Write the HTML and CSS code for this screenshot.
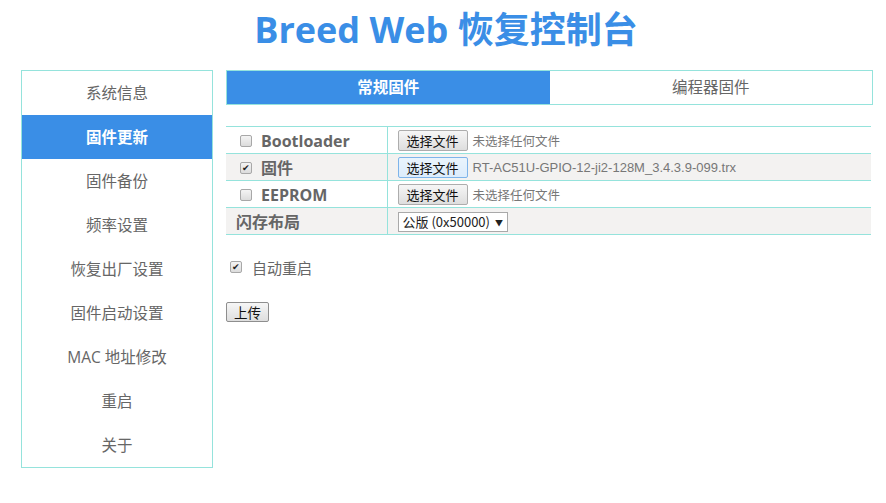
FILE: index.html
```html
<!DOCTYPE html>
<html lang="zh-CN">
<head>
<meta charset="utf-8">
<title>Breed Web 恢复控制台</title>
<link rel="stylesheet" href="styles.css">
</head>
<body>
<h1 class="title">Breed Web 恢复控制台</h1>
<div class="layout">
  <ul class="menu">
    <li class="menu-item">系统信息</li>
    <li class="menu-item active">固件更新</li>
    <li class="menu-item">固件备份</li>
    <li class="menu-item">频率设置</li>
    <li class="menu-item">恢复出厂设置</li>
    <li class="menu-item">固件启动设置</li>
    <li class="menu-item">MAC 地址修改</li>
    <li class="menu-item">重启</li>
    <li class="menu-item">关于</li>
  </ul>
  <div class="main">
    <div class="tabs">
      <div class="tab active">常规固件</div>
      <div class="tab">编程器固件</div>
    </div>
    <table class="form">
      <tr>
        <td class="label"><span class="cb"></span><span class="lt">Bootloader</span></td>
        <td class="field"><span class="btn">选择文件</span><span class="fname">未选择任何文件</span></td>
      </tr>
      <tr class="alt">
        <td class="label"><span class="cb checked">&#10004;</span><span class="lt">固件</span></td>
        <td class="field"><span class="btn focus">选择文件</span><span class="fname file">RT-AC51U-GPIO-12-ji2-128M_3.4.3.9-099.trx</span></td>
      </tr>
      <tr>
        <td class="label"><span class="cb"></span><span class="lt">EEPROM</span></td>
        <td class="field"><span class="btn">选择文件</span><span class="fname">未选择任何文件</span></td>
      </tr>
      <tr class="alt">
        <td class="label plain"><span class="lt">闪存布局</span></td>
        <td class="field"><span class="select">公版 (0x50000) <span class="arrow">&#9660;</span></span></td>
      </tr>
    </table>
    <div class="reboot"><span class="cb checked">&#10004;</span><span>自动重启</span></div>
    <div class="upload"><span class="btn up">上传</span></div>
  </div>
</div>
</body>
</html>
```
FILE: styles.css
```css
* { box-sizing: border-box; }
body {
  margin: 0;
  background: #fff;
  font-family: "Open Sans", "Noto Sans CJK SC", sans-serif;
  color: #666;
}
.title {
  margin: 0;
  height: 70px;
  padding-top: 5px;
  text-align: center;
  font-family: "Open Sans", "Noto Sans CJK SC", sans-serif;
  font-size: 36px;
  line-height: 50px;
  font-weight: 700;
  color: #3a8ee6;
  padding-left: 6px;
}
.layout {
  display: flex;
  gap: 13px;
  padding-left: 21px;
}
.menu {
  list-style: none;
  margin: 0;
  padding: 0;
  width: 192px;
  border: 1px solid #95e3dc;
}
.menu-item {
  height: 44px;
  line-height: 44px;
  text-align: center;
  font-size: 15.5px;
  color: #666;
}
.menu-item.active {
  background: #3a8ee6;
  color: #fff;
  font-weight: 700;
}
.main {
  width: 647px;
}
.tabs {
  display: flex;
  height: 35px;
  border: 1px solid #95e3dc;
}
.tab {
  flex: 1;
  text-align: center;
  line-height: 33px;
  font-size: 15.5px;
  color: #666;
}
.tab.active {
  background: #3a8ee6;
  color: #fff;
  font-weight: 700;
}
.form {
  margin-top: 21px;
  width: 645px;
  border-collapse: collapse;
}
.form td {
  height: 27px;
  padding: 0;
  border-top: 1px solid #95e3dc;
  border-bottom: 1px solid #95e3dc;
  line-height: 20px;
}
.form tr.alt td { background: #f3f2f1; }
.form td.label {
  width: 161px;
  border-right: 1px solid #95e3dc;
  padding-left: 14px;
  font-size: 16px;
  font-weight: 700;
  color: #666;
  white-space: nowrap;
}
.form td.label.plain { padding-left: 10px; }
.form td.field {
  padding-left: 10px;
}
.lt { vertical-align: middle; line-height: 20px; }
.cb {
  display: inline-block;
  width: 12px;
  height: 12px;
  border: 1px solid #a8a8a8;
  border-radius: 2px;
  background: linear-gradient(#f4f4f4, #dcdcdc);
  vertical-align: middle;
  margin-right: 9px;
  font-size: 9px;
  line-height: 10px;
  text-align: center;
  color: #222;
  font-weight: 400;
}
.btn {
  display: inline-block;
  height: 21px;
  padding: 0 8px;
  border: 1px solid #adadad;
  border-radius: 2px;
  background: linear-gradient(#f6f6f6, #dedede);
  color: #111;
  font-size: 13px;
  line-height: 19px;
  vertical-align: middle;
  font-family: "Noto Sans CJK SC", sans-serif;
}
.btn.focus {
  border-color: #7eb4ea;
  background: linear-gradient(#eaf4fc, #dcecfc);
}
.fname {
  margin-left: 5px;
  font-size: 12.5px;
  line-height: 20px;
  color: #777;
  vertical-align: middle;
  font-family: "Noto Sans CJK SC", sans-serif;
}
.fname.file {
  font-family: "Liberation Sans", Arial, sans-serif;
  font-size: 13px;
}
.select {
  display: inline-block;
  height: 20px;
  padding: 0 4px 0 4px;
  border: 1px solid #a9a9a9;
  background: #fff;
  color: #222;
  font-size: 13px;
  line-height: 18px;
  vertical-align: middle;
  font-family: "Noto Sans CJK SC", sans-serif;
}
.arrow { font-size: 8px; vertical-align: 1px; margin-left: 2px; }
.reboot {
  margin-top: 22px;
  padding-left: 4px;
  font-size: 15px;
  color: #666;
  display: flex;
  align-items: center;
  height: 20px;
}
.reboot .cb { margin-right: 10px; }
.upload {
  margin-top: 25px;
  display: flex;
}
.btn.up {
  padding: 0 7px;
  height: 20px;
  line-height: 18px;
  border-color: #8e8e8e;
  font-size: 13.5px;
}
```
